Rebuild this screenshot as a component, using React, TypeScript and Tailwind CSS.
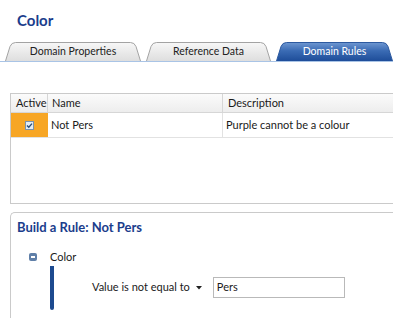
import React from "react";

const tabs = [
  { label: "Domain Properties", width: 136, active: false },
  { label: "Reference Data", width: 125, active: false },
  { label: "Domain Rules", width: 117, active: true },
];

function Tab({ label, width, active }: { label: string; width: number; active: boolean }) {
  const w = width;
  const d = `M0.5,19 L5,4.5 Q6.5,0.5 10.5,0.5 L${w - 10.5},0.5 Q${w - 6.5},0.5 ${w - 5},4.5 L${w - 0.5},19`;
  const gid = active ? "tabActive" : "tabIdle";
  return (
    <div className="relative h-[19px] shrink-0" style={{ width: w }}>
      <svg className="absolute inset-0" width={w} height={19}>
        <defs>
          <linearGradient id={gid} x1="0" y1="0" x2="0" y2="1">
            {active ? (
              <>
                <stop offset="0" stopColor="#6e97d1" />
                <stop offset="0.45" stopColor="#3a6bb4" />
                <stop offset="1" stopColor="#1e4d99" />
              </>
            ) : (
              <>
                <stop offset="0" stopColor="#f7f7f7" />
                <stop offset="1" stopColor="#dedede" />
              </>
            )}
          </linearGradient>
        </defs>
        <path d={d + " Z"} fill={`url(#${gid})`} stroke="none" />
        <path d={d} fill="none" stroke={active ? "#2d5aa0" : "#a3a3a3"} strokeWidth="1" />
      </svg>
      <div
        className={`relative flex h-full items-center justify-center pt-[1px] text-[10.5px] ${
          active ? "text-white" : "text-[#222]"
        }`}
      >
        {label}
      </div>
    </div>
  );
}

export default function App() {
  return (
    <div className="relative h-[318px] w-[393px] overflow-hidden bg-white font-['Lato',sans-serif] text-[#1a1a1a]">
      {/* Title */}
      <div className="pl-[17px] pt-[10px] text-[15px] font-bold leading-[21px] text-[#1b3d8c]">Color</div>

      {/* Tabs */}
      <div className="mt-[11px] flex items-end gap-[5px] pl-[5px]">
        {tabs.map((t) => (
          <Tab key={t.label} {...t} />
        ))}
      </div>
      <div className="h-[1px] w-full bg-[#a9c4e6]" />

      {/* Rules grid */}
      <div className="ml-[10px] mt-[31px] h-[111px] w-[420px] border border-[#cacaca] text-[11px]">
        <div className="flex h-[19px] border-b border-[#d6d6d6] bg-gradient-to-b from-[#fbfbfb] to-[#ededed] leading-[18px]">
          <div className="w-[37px] border-r border-[#d6d6d6] pl-[5px]">Active</div>
          <div className="w-[175px] border-r border-[#d6d6d6] pl-[4px]">Name</div>
          <div className="pl-[5px]">Description</div>
        </div>
        <div className="flex h-[25px] border-b border-[#e2e2e2] leading-[24px]">
          <div className="flex w-[37px] items-center justify-center bg-[#f7a625]">
            <svg width="9" height="9" viewBox="0 0 9 9">
              <rect x="0.5" y="0.5" width="8" height="8" fill="#e4ecf4" stroke="#7a93ad" />
              <path d="M2 4.5 L3.8 6.3 L7 2.6" fill="none" stroke="#2a4d78" strokeWidth="1.4" />
            </svg>
          </div>
          <div className="w-[175px] border-r border-[#e2e2e2] pl-[3px]">Not Pers</div>
          <div className="pl-[3px]">Purple cannot be a colour</div>
        </div>
      </div>

      {/* Rule builder */}
      <div className="ml-[10px] mt-[8px] h-[120px] w-[420px] rounded-tl-[5px] border-l border-t border-[#cacaca] text-[11px]">
        <div className="pl-[6px] pt-[5px] text-[13px] font-bold leading-[18px] text-[#1b3d8c]">
          Build a Rule: Not Pers
        </div>
        <div className="ml-[18px] mt-[13px] flex h-[16px] items-center">
          <div className="flex h-[8px] w-[8px] items-center justify-center rounded-[2px] bg-[#5f7fa8]">
            <div className="h-[1.5px] w-[4px] bg-white" />
          </div>
          <span className="ml-[13px]">Color</span>
        </div>
        <div className="ml-[39px] mt-[1px] flex">
          <div className="h-[44px] w-[4px] rounded-b-[2px] bg-[#1d4a8f]" />
          <div className="ml-[38px] mt-[11px] flex h-[21px] items-center">
            <span>Value is not equal to</span>
            <svg className="ml-[6px]" width="6" height="4" viewBox="0 0 6 4">
              <path d="M0 0 H6 L3 3.5 Z" fill="#222" />
            </svg>
            <div className="ml-[11px] flex h-[21px] w-[132px] items-center border border-[#b9b9b9] pl-[3px]">Pers</div>
          </div>
        </div>
      </div>
    </div>
  );
}
